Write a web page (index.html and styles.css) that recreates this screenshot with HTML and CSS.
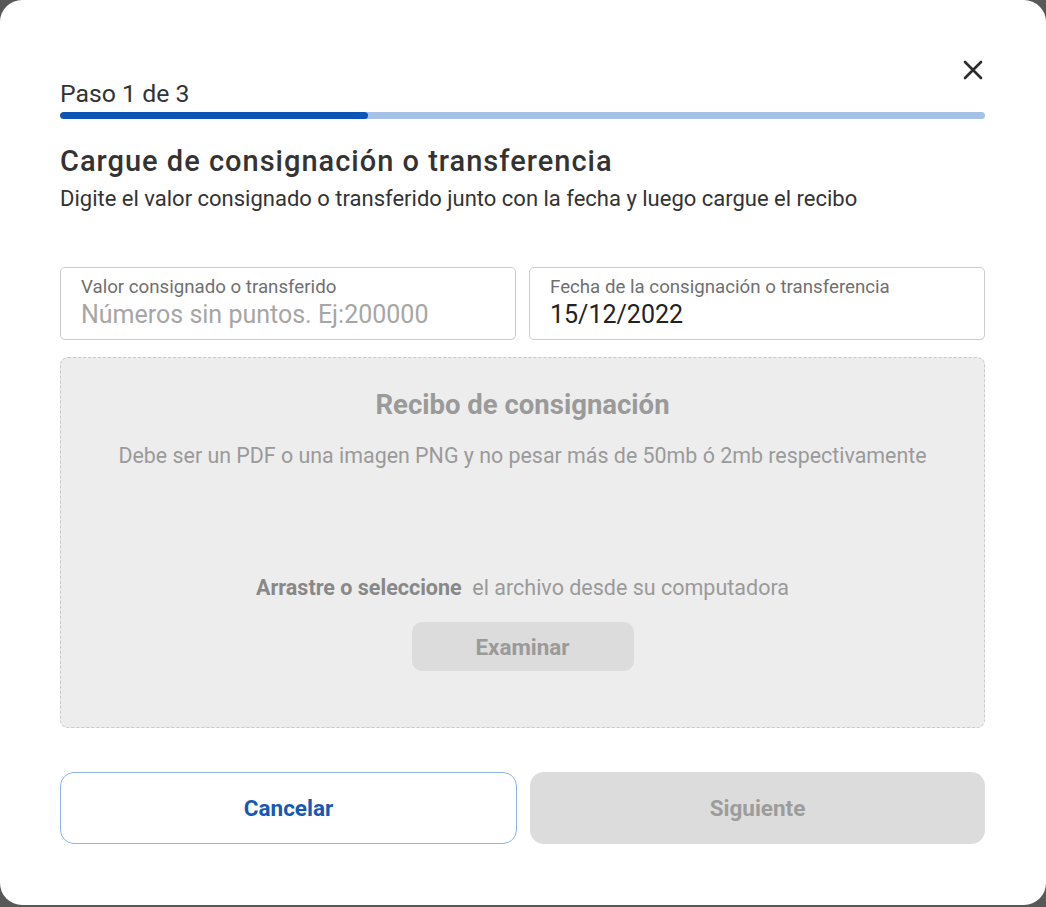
FILE: index.html
```html
<!DOCTYPE html>
<html lang="es">
<head>
    <meta charset="UTF-8">
    <meta name="viewport" content="width=device-width, initial-scale=1.0">
    <title>Cargue de consignación</title>
    <link rel="stylesheet" href="styles.css">
</head>
<body>
    <div class="modal">
        <button class="close-btn" aria-label="Cerrar">
            <svg width="22" height="22" viewBox="0 0 22 22">
                <path d="M3 3 L19 19 M19 3 L3 19" stroke="#2b2b2b" stroke-width="2.6" stroke-linecap="round"/>
            </svg>
        </button>

        <p class="step">Paso 1 de 3</p>
        <div class="progress">
            <div class="progress-fill" style="width: 33.3%;"></div>
        </div>

        <h1>Cargue de consignación o transferencia</h1>
        <p class="subtitle">Digite el valor consignado o transferido junto con la fecha y luego cargue el recibo</p>

        <div class="fields">
            <label class="field">
                <span class="field-label">Valor consignado o transferido</span>
                <input type="text" placeholder="Números sin puntos. Ej:200000">
            </label>
            <label class="field">
                <span class="field-label">Fecha de la consignación o transferencia</span>
                <input type="text" value="15/12/2022">
            </label>
        </div>

        <div class="dropzone">
            <h2>Recibo de consignación</h2>
            <p class="drop-desc">Debe ser un PDF o una imagen PNG y no pesar más de 50mb ó 2mb respectivamente</p>
            <p class="drop-hint"><strong>Arrastre o seleccione</strong>&nbsp; el archivo desde su computadora</p>
            <button class="browse-btn">Examinar</button>
        </div>

        <div class="actions">
            <button class="btn btn-outline">Cancelar</button>
            <button class="btn btn-disabled">Siguiente</button>
        </div>
    </div>
</body>
</html>
```

FILE: styles.css
```css
body {
    margin: 0;
    background: #585858;
    font-family: Roboto, 'Noto Sans', sans-serif;
    color: #333;
}

.modal {
    position: relative;
    box-sizing: border-box;
    height: 905px;
    background: white;
    border-radius: 22px;
    padding: 80px 61px 0 60px;
}

.close-btn {
    position: absolute;
    top: 59px;
    right: 62px;
    width: 22px;
    height: 22px;
    padding: 0;
    border: none;
    background: none;
    cursor: pointer;
}

.step {
    margin: 0;
    font-size: 24.8px;
    line-height: 28px;
    color: #333;
}

.progress {
    margin-top: 4px;
    height: 7px;
    border-radius: 4px;
    background: #a5c1e6;
    overflow: hidden;
}

.progress-fill {
    height: 100%;
    background: #0d55b5;
    border-radius: 4px;
}

h1 {
    margin: 28px 0 0;
    font-size: 29px;
    font-weight: 500;
    letter-spacing: 1px;
    line-height: 28px;
    color: #333;
}

.subtitle {
    margin: 13px 0 0;
    font-size: 22px;
    line-height: 22px;
    color: #333;
}

.fields {
    display: flex;
    gap: 13px;
    margin-top: 57px;
}

.field {
    flex: 1;
    box-sizing: border-box;
    height: 73px;
    padding: 8px 20px 0;
    border: 1px solid #cbcbcb;
    border-radius: 5px;
    display: flex;
    flex-direction: column;
    gap: 3px;
}

.field-label {
    font-size: 18.7px;
    line-height: 22px;
    color: #707070;
}

.field input {
    border: none;
    outline: none;
    padding: 0;
    font-family: inherit;
    font-size: 25px;
    line-height: 28px;
    height: 28px;
    color: #222;
    background: transparent;
}

.field input::placeholder {
    color: #a6a6a6;
}

.dropzone {
    box-sizing: border-box;
    height: 371px;
    margin-top: 17px;
    padding-top: 31px;
    background: #ededed;
    border: 1px dashed #c9c9c9;
    border-radius: 8px;
    text-align: center;
}

.dropzone h2 {
    margin: 0;
    font-size: 27.5px;
    font-weight: 700;
    line-height: 32px;
    color: #9a9a9a;
}

.drop-desc {
    margin: 22px 0 0;
    font-size: 21.4px;
    line-height: 25px;
    color: #9a9a9a;
}

.drop-hint {
    margin: 107px 0 0;
    font-size: 21.5px;
    line-height: 25px;
    color: #9a9a9a;
}

.drop-hint strong {
    color: #888;
}

.browse-btn {
    margin-top: 22px;
    width: 222px;
    height: 49px;
    border: none;
    border-radius: 10px;
    background: #dcdcdc;
    font-family: inherit;
    font-size: 22.4px;
    font-weight: 700;
    color: #9a9a9a;
    cursor: pointer;
}

.actions {
    display: flex;
    gap: 13px;
    margin-top: 44px;
}

.btn {
    flex: 1;
    height: 72px;
    border-radius: 14px;
    font-family: inherit;
    font-size: 22.5px;
    font-weight: 700;
    cursor: pointer;
}

.btn-outline {
    background: white;
    border: 1px solid #8fb5e8;
    color: #1559b5;
}

.btn-disabled {
    background: #dcdcdc;
    border: none;
    color: #9c9c9c;
}
```
